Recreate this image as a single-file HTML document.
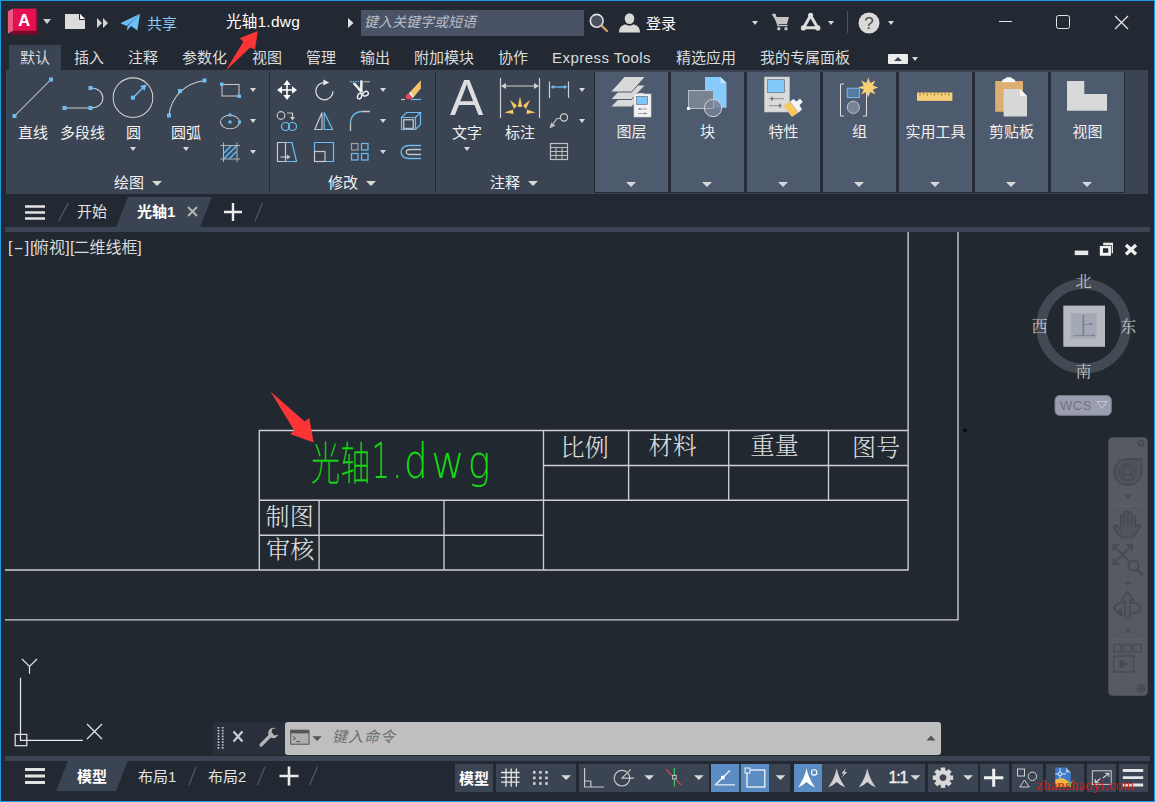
<!DOCTYPE html>
<html lang="zh-CN">
<head>
<meta charset="utf-8">
<title>光轴1.dwg</title>
<style>
*{box-sizing:border-box;margin:0;padding:0}
html,body{width:1155px;height:802px;overflow:hidden;background:#222933}
body{position:relative;font-family:"Liberation Sans","Noto Sans CJK SC",sans-serif;font-size:15px;color:#e8e8e8}
.abs{position:absolute}
#frame{position:absolute;left:0;top:0;width:1155px;height:802px;border:1px solid #1b9ae2;pointer-events:none;z-index:50}
.t{position:absolute;white-space:nowrap;line-height:20px;height:20px}
svg{position:absolute;overflow:visible}
/* title */
#rtabs .t{top:48px;color:#dcdcdc}
#rtabact{left:9px;top:45px;width:52px;height:26px;background:#3b4453}
#ribbon{left:6px;top:70px;width:1142px;height:123.700px;background:#3b4453}
.sep{position:absolute;top:72px;width:1px;height:120px;background:#262c37}
.pbtn{position:absolute;top:72px;width:73px;height:120px;background:#4e5a6e}
.pbtn .t{left:0;width:100%;text-align:center;top:49.5px;color:#f0f0f0}
.dd{position:absolute;width:0;height:0;border-left:4px solid transparent;border-right:4px solid transparent;border-top:5px solid #d8d8d8}
.dds{position:absolute;width:0;height:0;border-left:3px solid transparent;border-right:3px solid transparent;border-top:4px solid #d8d8d8}
#ftabs{left:5px;top:194px;width:1145px;height:33px;background:#222933}
#fstrip{left:5px;top:227px;width:1145px;height:5px;background:#3b4453}
#draw{left:5px;top:232px;width:1145px;height:528px;background:#212830}
#sbar{left:5px;top:760px;width:1145px;height:38px;background:#222933}
.lab{position:absolute;white-space:nowrap;font-family:"Liberation Serif","Noto Serif CJK SC",serif;font-size:24px;font-weight:300;line-height:32px;color:#e0e0e0;letter-spacing:0.300px}
.sg{position:absolute;top:763.500px;height:28.500px;background:#3b4453}
.vl span{position:absolute;top:0;display:inline-block}
</style>
</head>
<body>
<div id="frame"></div>

<!-- ===== TITLE BAR ===== -->
<div id="title" class="abs" style="left:0;top:0;width:1155px;height:45px">
<!-- logo -->
<svg style="left:0;top:0" width="45" height="40" viewBox="0 0 45 40">
<polygon points="11.200,31 13,12.700 36.300,12.700 38.100,12.700 38.100,34.800 11.200,34.800" fill="#78092a"/>
<polygon points="7.900,11.200 13.100,8.600 13.100,30.700 7.900,33.700" fill="#e9587f"/>
<rect x="13.100" y="8.600" width="23.200" height="22.100" fill="#e5104f"/>
<text x="24.300" y="25.800" text-anchor="middle" font-family="Liberation Sans,sans-serif" font-weight="bold" font-size="16.500" fill="#fff">A</text>
</svg>
<div class="dd" style="left:43px;top:19px;border-top-color:#d0d0d0"></div>
<!-- new file -->
<svg style="left:65px;top:14px" width="21" height="16" viewBox="0 0 21 16"><path d="M0 0H15L20 5V15H0Z" fill="#dcdcdc"/><path d="M15 0V5H20Z" fill="#f6f6f6"/><path d="M14.5 0V5.5H20" fill="none" stroke="#222933" stroke-width="1"/></svg>
<svg style="left:97px;top:18px" width="11" height="10" viewBox="0 0 11 10"><path d="M0 0L5 5L0 10ZM6 0L11 5L6 10Z" fill="#d4d4d4"/></svg>
<!-- share -->
<svg style="left:115px;top:10px" width="30" height="25" viewBox="115 10 30 25">
<path d="M120.300 23.200L140 13.800L126.800 26Z" fill="#6cbef5"/>
<path d="M140 13.800L128 25.500L127 30.500L131 26.200Z" fill="#4d9fd9"/>
<path d="M140 13.800L137.400 30.500L130 25.200Z" fill="#6cbef5"/>
<path d="M127.700 26.500L140 13.800L127 30.600Z" fill="#6cbef5"/>
</svg>
<div class="t" style="left:147px;top:14px;color:#8ccaf7">共享</div>
<div class="t" style="left:226px;top:11.500px;color:#fff;font-size:15.500px;letter-spacing:0.250px">光轴1.dwg</div>
<svg style="left:347.500px;top:17.500px" width="6" height="10" viewBox="0 0 6 10"><path d="M0 0L5.500 5L0 10Z" fill="#e0e0e0"/></svg>
<div class="abs" style="left:361px;top:10px;width:223px;height:26px;background:#4a5366"></div>
<div class="t" style="left:364px;top:12px;color:#b9bdc6;font-style:italic;font-size:14px">键入关键字或短语</div>
<!-- magnifier -->
<svg style="left:589px;top:13px" width="20" height="20" viewBox="0 0 20 20"><circle cx="7.700" cy="7.800" r="6.400" fill="#4a515c" stroke="#e0e0e0" stroke-width="1.600"/><path d="M12.800 12.800L18 18" stroke="#c9a06a" stroke-width="2.4" stroke-linecap="round"/></svg>
<!-- user -->
<svg style="left:619px;top:13px" width="21" height="20" viewBox="0 0 21 20"><ellipse cx="10.5" cy="5.6" rx="4.8" ry="5.4" fill="#d8d8d8"/><path d="M0 19.5C0 13.5 4 11.5 7 11.5C8.5 13 12.5 13 14 11.5C17 11.5 21 13.5 21 19.5Z" fill="#d8d8d8"/></svg>
<div class="t" style="left:646px;top:14px;color:#fff">登录</div>
<div class="dds" style="left:752px;top:21px"></div>
<!-- cart -->
<svg style="left:772px;top:13px" width="18" height="18" viewBox="0 0 18 18"><path d="M0 1.5H3L4 4H17L15 11H5.5Z" fill="#c4c4c4"/><path d="M0.3 1.5H3L6 12.5H15.5" fill="none" stroke="#c4c4c4" stroke-width="1.6"/><circle cx="6.8" cy="15.8" r="1.7" fill="#c4c4c4"/><circle cx="14" cy="15.8" r="1.7" fill="#c4c4c4"/></svg>
<!-- autodesk app -->
<svg style="left:799px;top:11px" width="23" height="21" viewBox="799 11 23 21"><path d="M810.600 15.400L803.600 27.800H817.600Z" fill="none" stroke="#dedede" stroke-width="3" stroke-linejoin="round"/><circle cx="810.600" cy="15.300" r="2.500" fill="#dedede"/><circle cx="803.400" cy="27.900" r="2.600" fill="#dedede"/><circle cx="817.800" cy="27.900" r="2.600" fill="#dedede"/></svg>
<div class="dds" style="left:828px;top:21px"></div>
<div class="abs" style="left:847px;top:11px;width:1px;height:22px;background:#44546f"></div>
<svg style="left:858px;top:12px" width="22" height="22" viewBox="0 0 22 22"><circle cx="11" cy="11" r="10.5" fill="#dadada"/><text x="11" y="17" text-anchor="middle" font-family="Liberation Sans,sans-serif" font-size="17" fill="#4c4c4c">?</text></svg>
<div class="dds" style="left:888px;top:21px"></div>
<!-- window controls -->
<div class="abs" style="left:998.500px;top:20.500px;width:13px;height:1.300px;background:#e4e4e4"></div>
<div class="abs" style="left:1056px;top:15px;width:13.500px;height:13.500px;border:1.400px solid #e4e4e4;border-radius:2.500px"></div>
<svg style="left:1114.500px;top:15.500px" width="13" height="13" viewBox="0 0 13 13"><path d="M0 0L13 13M13 0L0 13" stroke="#e4e4e4" stroke-width="1.300"/></svg>
</div>

<!-- ===== RIBBON TABS ===== -->
<div id="rtabact" class="abs"></div>
<div id="rtabs">
<div class="t" style="left:20px">默认</div>
<div class="t" style="left:74px">插入</div>
<div class="t" style="left:128px">注释</div>
<div class="t" style="left:182px">参数化</div>
<div class="t" style="left:252px">视图</div>
<div class="t" style="left:306px">管理</div>
<div class="t" style="left:360px">输出</div>
<div class="t" style="left:414px">附加模块</div>
<div class="t" style="left:498px">协作</div>
<div class="t" style="left:552px;letter-spacing:0.45px">Express Tools</div>
<div class="t" style="left:676px">精选应用</div>
<div class="t" style="left:760px">我的专属面板</div>
<div class="abs" style="left:888px;top:54px;width:20px;height:10px;background:#ececec;border-radius:1px"></div>
<div class="abs" style="left:894px;top:57px;width:0;height:0;border-left:4px solid transparent;border-right:4px solid transparent;border-bottom:4px solid #3b4453"></div>
<div class="dds" style="left:912px;top:57px"></div>
</div>

<!-- ===== RIBBON ===== -->
<div id="ribbon" class="abs"></div>
<div id="rib">
<!-- ==== DRAW PANEL ==== -->
<svg style="left:0;top:0" width="280" height="200" viewBox="0 0 280 200" fill="none" stroke="#cfcfcf" stroke-width="1.05">
<!-- line -->
<path d="M14.5 116L51 79.5"/>
<!-- polyline -->
<path d="M64.5 108H90.5M90.5 108C107 108 107 88 90.5 88"/>
<!-- circle -->
<circle cx="133" cy="97.7" r="19.8"/>
<path d="M133 97.7L144 86.7" stroke="#6dbdf2" stroke-width="1.4"/>
<path d="M146.5 84.2L140 86L144.7 90.7Z" fill="#6dbdf2" stroke="none"/>
<!-- arc -->
<path d="M169 115.5C171 96 186 83 204.5 80.5"/>
<g fill="#6dbdf2" stroke="none">
<rect x="12.5" y="114" width="4" height="4"/><rect x="49" y="77.5" width="4" height="4"/>
<rect x="62.5" y="106" width="4" height="4"/><rect x="88.5" y="106" width="4" height="4"/><rect x="88.5" y="86" width="4" height="4"/>
<rect x="131" y="95.7" width="4" height="4"/>
<rect x="167" y="113.5" width="4" height="4"/><rect x="178" y="89" width="4" height="4"/><rect x="202.5" y="78.5" width="4" height="4"/>
</g>
<!-- rectangle small -->
<rect x="222" y="84.5" width="17" height="11.5" stroke="#c8c8c8"/>
<rect x="220" y="82.5" width="3.5" height="3.5" fill="#6dbdf2" stroke="none"/><rect x="237.5" y="94.5" width="3.5" height="3.5" fill="#6dbdf2" stroke="none"/>
<!-- ellipse small -->
<ellipse cx="230" cy="122" rx="9.5" ry="6.8" stroke="#c8c8c8"/>
<rect x="228.5" y="113.5" width="3" height="3" fill="#6dbdf2" stroke="none"/><rect x="228.5" y="120.5" width="3" height="3" fill="#6dbdf2" stroke="none"/><rect x="238" y="120.5" width="3" height="3" fill="#6dbdf2" stroke="none"/>
<!-- hatch small -->
<rect x="223.5" y="145.500" width="13.5" height="13.500" fill="#35506a" stroke="none"/>
<path d="M224 153L231 146M224 158.500L236.500 146M229.500 158.500L236.500 151.500" stroke="#6dbdf2" stroke-width="1.3"/>
<path d="M220.500 145.500H240M220.500 159H240M223.500 142.500V162M237 142.500V162" stroke="#b4b4b4" stroke-width="1"/>
</svg>
<div class="t" style="left:18px;top:123px;color:#f2f2f2">直线</div>
<div class="t" style="left:60px;top:123px;color:#f2f2f2">多段线</div>
<div class="t" style="left:126px;top:123px;color:#f2f2f2">圆</div>
<div class="t" style="left:171px;top:123px;color:#f2f2f2">圆弧</div>
<div class="dds" style="left:130px;top:147px"></div>
<div class="dds" style="left:183px;top:147px"></div>
<div class="dds" style="left:250px;top:88px"></div>
<div class="dds" style="left:250px;top:119px"></div>
<div class="dds" style="left:250px;top:150px"></div>
<div class="t" style="left:114px;top:173px;color:#f2f2f2">绘图</div>
<div class="dd" style="left:152px;top:181px;border-width:5px 5px 0 5px"></div>
<div class="sep" style="left:269px"></div>

<!-- ==== MODIFY PANEL ==== -->
<svg style="left:270px;top:70px" width="165" height="125" viewBox="270 70 165 125" fill="none" stroke="#d6d6d6" stroke-width="1.2">
<!-- move -->
<path d="M286.200 84H287.800V89.200H293V90.800H287.800V96H286.200V90.800H281V89.200H286.200Z" fill="#fff" stroke="none"/>
<path d="M287 80L290.700 85H283.300ZM287 100L290.700 95H283.300ZM277 90L282 86.300V93.700ZM297 90L292 86.300V93.700Z" fill="#fff" stroke="none"/>
<!-- rotate -->
<path d="M323.800 82.600A8.600 8.600 0 1 0 333 91.200" stroke="#e0e0e0" stroke-width="1.200"/>
<path d="M323.300 79.600L329.200 82.600L323.300 85.600Z" fill="#e8e8e8" stroke="none"/>
<!-- trim -->
<path d="M350 81.700H359" stroke="#6dbdf2" stroke-dasharray="1.600 1" stroke-width="1.300"/><path d="M363.500 81.700H370" stroke="#a8a8a8" stroke-width="1.300"/>
<path d="M352.600 83.400L354.800 82.500L363 91.200L360.600 92.800Z" fill="#f0f0f0" stroke="none"/>
<path d="M360.200 80.300L362.700 80.600L362.500 92.500H360Z" fill="#f0f0f0" stroke="none"/>
<ellipse cx="359.600" cy="96.200" rx="2" ry="2.900" transform="rotate(18 359.600 96.200)" stroke="#f0f0f0" stroke-width="1.400"/><ellipse cx="365.600" cy="93.700" rx="2.900" ry="2.100" transform="rotate(-25 365.600 93.700)" stroke="#f0f0f0" stroke-width="1.400"/>
<!-- eraser -->
<path d="M410.500 91.500L420.800 80.200V88.500L414.200 96.500Z" fill="#f2c56b" stroke="none"/>
<path d="M408.800 93.200L410.500 91.500L414.200 96.500L412.500 98Z" fill="#f4f4f4" stroke="none"/>
<path d="M405.800 95.500Q405 98 407 99Q409.500 100 412.500 98L408.800 93.200Z" fill="#ee4459" stroke="none"/>
<path d="M401 99.500H405" stroke="#c8c8c8"/><path d="M411 99.500H421" stroke="#6dbdf2"/>
<!-- copy -->
<circle cx="281" cy="115.500" r="3.800" stroke="#c8c8c8"/>
<path d="M287 113H292.500V118" stroke="#c8c8c8"/><path d="M290 117L292.500 120.500L295 117Z" fill="#c8c8c8" stroke="none"/>
<circle cx="285.500" cy="126.500" r="4" stroke="#6dbdf2"/><circle cx="292.500" cy="126.500" r="4" stroke="#6dbdf2"/>
<!-- mirror -->
<path d="M322 112.500L314.800 129.500H322Z" stroke="#c8c8c8"/><path d="M324.200 112.500L332.500 129.500H324.200Z" stroke="#6dbdf2"/>
<!-- fillet -->
<path d="M362 111.500C355.500 111.500 350.500 116.500 350.500 123" stroke="#6dbdf2" stroke-width="1.300"/><path d="M350.500 123V131M362 111.500H370" stroke="#c8c8c8" stroke-width="1.300"/>
<!-- box -->
<path d="M401.500 117.500H415.500V129.500H401.500ZM401.500 117.500L406.500 112.500H420.500L415.500 117.500M420.500 112.500V124.500L415.500 129.500" stroke="#6dbdf2" stroke-width="1.200"/>
<rect x="403.700" y="119.700" width="9.600" height="8.800" stroke="#b8b8b8" stroke-width="1.500"/>
<!-- stretch -->
<path d="M277.500 142.500H285.500V161.500H277.500Z" stroke="#c8c8c8"/>
<path d="M285.500 142.500H292L296.500 161.500H285.500" stroke="#6dbdf2"/>
<path d="M280.500 157H288" stroke="#c8c8c8"/><path d="M287 154.500L290.500 157L287 159.500Z" fill="#c8c8c8" stroke="none"/>
<!-- scale -->
<path d="M314.500 142.500H333.500V161.500H325" stroke="#6dbdf2"/><path d="M314.500 142.500V151.500" stroke="#6dbdf2"/>
<rect x="314.500" y="151.500" width="10.500" height="10" stroke="#c8c8c8"/>
<!-- array -->
<rect x="351.500" y="143.500" width="6.500" height="6.500" stroke="#a0a0a0"/><rect x="361.500" y="143.500" width="6.500" height="6.500" stroke="#6dbdf2"/>
<rect x="351.500" y="153.500" width="6.500" height="6.500" stroke="#6dbdf2"/><rect x="361.500" y="153.500" width="6.500" height="6.500" stroke="#6dbdf2"/>
<!-- offset -->
<path d="M421 145.500H409C398.500 145.500 398.500 158.500 409 158.500H421" stroke="#6dbdf2" stroke-width="1.300"/>
<path d="M421 149.500H410C405 149.500 405 154.500 410 154.500H421" stroke="#c8c8c8" stroke-width="1.300"/>
</svg>
<div class="dds" style="left:380px;top:88px"></div>
<div class="dds" style="left:380px;top:119px"></div>
<div class="dds" style="left:380px;top:150px"></div>
<div class="t" style="left:328px;top:173px;color:#f2f2f2">修改</div>
<div class="dd" style="left:366px;top:181px;border-width:5px 5px 0 5px"></div>
<div class="sep" style="left:435px"></div>

<!-- ==== ANNOTATE PANEL ==== -->
<div class="t" style="left:450px;top:70px;height:56px;line-height:56px;font-size:50px;color:#dedede;font-family:'Liberation Sans',sans-serif">A</div>
<div class="t" style="left:452px;top:123px;color:#f2f2f2">文字</div>
<div class="dds" style="left:464px;top:147px"></div>
<svg style="left:495px;top:70px" width="100" height="100" viewBox="495 70 100 100" fill="none" stroke="#d6d6d6" stroke-width="1.200">
<path d="M500.500 78V118M539.500 78V118M502 86H538" stroke="#d0d0d0"/>
<path d="M501 86L506 83V89ZM539 86L534 83V89Z" fill="#d0d0d0" stroke="none"/>
<g fill="#f6c761" stroke="none">
<path d="M520 96.500L522.200 107H517.800Z"/>
<path d="M510 100L517 105.500L514 109Z"/>
<path d="M530 100L523 105.500L526 109Z"/>
<path d="M504.500 112.500L513 109.500L513.500 114Z"/>
<path d="M535.500 112.500L527 109.500L526.500 114Z"/>
</g>
<!-- small linear dim -->
<path d="M549.500 81.500V98M568.500 81.500V98" stroke="#d0d0d0"/>
<path d="M552 87H566" stroke="#6dbdf2" stroke-width="1.400"/><path d="M550.500 87L554 85V89ZM567.500 87L564 85V89Z" fill="#6dbdf2" stroke="none"/>
<!-- leader -->
<circle cx="564" cy="117.500" r="3.600" stroke="#d0d0d0"/>
<path d="M560.500 118.500H557L551.500 126" stroke="#c0c0c0"/><path d="M549.500 128.500L551 122.500L555.500 125.500Z" fill="#c0c0c0" stroke="none"/>
<!-- table -->
<rect x="550.500" y="143.500" width="17" height="16" stroke="#c0c0c0"/>
<path d="M550.500 147.500H567.500M550.500 151.500H567.500M550.500 155.500H567.500M556 147.500V159.500M562 147.500V159.500" stroke="#c0c0c0" stroke-width="1"/>
</svg>
<div class="t" style="left:505px;top:123px;color:#f2f2f2">标注</div>
<div class="dds" style="left:579px;top:88px"></div>
<div class="dds" style="left:579px;top:119px"></div>
<div class="t" style="left:490px;top:173px;color:#f2f2f2">注释</div>
<div class="dd" style="left:528px;top:181px;border-width:5px 5px 0 5px"></div>
</div>


<!-- ==== COLLAPSED PANELS ==== -->
<div id="pans">
<div class="abs" style="left:593.500px;top:71.500px;width:531.700px;height:121.700px;background:#252c37"></div>
<div class="pbtn" style="left:595px"><div class="t">图层</div><div class="dd" style="left:31px;top:110px;border-width:5px 5px 0 5px"></div></div>
<div class="pbtn" style="left:671px"><div class="t">块</div><div class="dd" style="left:31px;top:110px;border-width:5px 5px 0 5px"></div></div>
<div class="pbtn" style="left:747px"><div class="t">特性</div><div class="dd" style="left:31px;top:110px;border-width:5px 5px 0 5px"></div></div>
<div class="pbtn" style="left:823px"><div class="t">组</div><div class="dd" style="left:31px;top:110px;border-width:5px 5px 0 5px"></div></div>
<div class="pbtn" style="left:899px"><div class="t">实用工具</div><div class="dd" style="left:31px;top:110px;border-width:5px 5px 0 5px"></div></div>
<div class="pbtn" style="left:975px"><div class="t">剪贴板</div><div class="dd" style="left:31px;top:110px;border-width:5px 5px 0 5px"></div></div>
<div class="pbtn" style="left:1051px"><div class="t">视图</div><div class="dd" style="left:31px;top:110px;border-width:5px 5px 0 5px"></div></div>
<svg style="left:590px;top:70px" width="550" height="60" viewBox="590 70 550 60">
<!-- layers -->
<g fill="#d9d9d9" stroke="#4e5a6e" stroke-width="1">
<path d="M610.500 107L624.500 92.500H645.500L631.500 107Z"/>
<path d="M610.500 99.500L624.500 85H645.500L631.500 99.500Z"/>
<path d="M610.500 92L624.500 76.500H645.500L631.500 92Z"/>
</g>
<rect x="634" y="94" width="17" height="23" fill="#f2f2f2" stroke="#cfcfcf" stroke-width="0.600"/>
<rect x="636.500" y="96.500" width="11" height="8" fill="#7cc8fb" stroke="#56606f" stroke-width="0.600"/>
<path d="M638 109H647M638 113.500H647" stroke="#8a8a8a" stroke-width="0.800"/><path d="M638 109L640.500 107.700V110.300ZM647 113.500L644.500 112.200V114.800Z" fill="#8a8a8a"/>
<!-- block -->
<path d="M705 77H720.500L726.500 83V107.700H705Z" fill="#86cbfb"/><path d="M720.500 77V83H726.500Z" fill="#c4e4fb"/>
<rect x="688.500" y="90.500" width="25" height="18" fill="#798394" stroke="#b9bdc4" stroke-width="1"/>
<circle cx="713" cy="108" r="8.700" fill="#798394" fill-opacity="0.850" stroke="#d4d4d4" stroke-width="1"/>
<path d="M713.500 99.500V108.500H704.500" fill="none" stroke="#aab0ba" stroke-width="0.800"/>
<rect x="687" y="107" width="3" height="3" fill="#f0f0f0"/>
<!-- properties -->
<rect x="764.500" y="77" width="25" height="35" fill="#dadada" stroke="#c2c2c2" stroke-width="0.600"/>
<rect x="767.500" y="79.700" width="17" height="12.800" fill="#82cafb" stroke="#56606f" stroke-width="0.600"/>
<path d="M769 98.700H784M769 105.700H782" stroke="#7a7a7a" stroke-width="0.800"/><path d="M772 96.700V100.700M780 103.700V107.700" stroke="#555" stroke-width="1.200"/>
<path d="M783.500 106L790 101.500L798.500 112.500L792 117Z" fill="#f6c761"/>
<path d="M790 101.500L793.500 99L796.500 101.500L800 98.500L802.800 102L799.500 105L802 109.500L798.500 112.500Z" fill="#f4f4f4"/>
<!-- group -->
<path d="M844 84H840.500V116H844M863 84H866.500V116H863" fill="none" stroke="#e0e0e0" stroke-width="1"/>
<rect x="847.200" y="88.200" width="12.300" height="9.400" fill="#557aa3" stroke="#79c2f5" stroke-width="0.900"/>
<circle cx="853.300" cy="107.300" r="6.100" fill="#798394" stroke="#c6c9cf" stroke-width="0.900"/>
<path d="M868.300 77.500L870.200 83L875.400 80.400L872.800 85.600L878.300 87.500L872.800 89.400L875.400 94.600L870.200 92L868.300 97.500L866.400 92L861.200 94.600L863.800 89.400L858.300 87.500L863.800 85.600L861.200 80.400L866.400 83Z" fill="#f9d078"/>
<!-- ruler -->
<rect x="917" y="92.500" width="35.400" height="8.400" fill="#f6cf7a"/>
<path d="M920 92.500V96M923.600 92.500V95M927.200 92.500V96M930.800 92.500V95M934.400 92.500V96M938 92.500V95M941.600 92.500V96M945.200 92.500V95M948.800 92.500V96" stroke="#b38b3a" stroke-width="1.100"/>
<!-- clipboard -->
<rect x="995.200" y="81" width="27.800" height="30.800" fill="#dcae72"/>
<path d="M1002 82.300C1002 78 1005.500 79.500 1006.500 77.200H1011C1012 79.500 1015.500 78 1015.500 82.300Z" fill="#f6f6f6"/>
<path d="M1003.600 89H1020L1027 96V116.400H1003.600Z" fill="#d8d8d8"/><path d="M1020 89V96H1027Z" fill="#f4f4f4"/>
<!-- view -->
<path d="M1067 81H1084.300V94H1107V110.800H1067Z" fill="#d9d9d9"/>
</svg>
</div>

<!-- ===== FILE TABS ===== -->
<div id="ftabs" class="abs"></div>
<div id="fstrip" class="abs"></div>
<svg style="left:0;top:194px" width="300" height="34" viewBox="0 194 300 34">
<path d="M116 227L128 197H212L200 227Z" fill="#3b4453"/>
<path d="M25 206.500H45M25 212.500H45M25 218.500H45" stroke="#e2e2e2" stroke-width="2.600"/>
<path d="M58.500 221L68.500 203M255 221L262.500 203" stroke="#4f5868" stroke-width="1.300"/>
<path d="M188 207L197 216M197 207L188 216" stroke="#b8b8b8" stroke-width="1.800"/>
<path d="M224 212H242M233 203V221" stroke="#ececec" stroke-width="2.400"/>
</svg>
<div class="t" style="left:77px;top:202px;color:#e4e4e4">开始</div>
<div class="t" style="left:137px;top:202px;color:#fff;font-weight:bold">光轴1</div>

<!-- ===== DRAWING ===== -->
<div id="draw" class="abs"></div>
<div id="dw">
<div class="t vl" style="left:0;top:238px;width:150px;color:#dadada;font-size:16px"><span style="left:8px">[</span><span style="left:15.800px;transform:scaleX(1.900);transform-origin:50% 50%">-</span><span style="left:24.800px">]</span><span style="left:30.100px">[</span><span style="left:33px">俯视</span><span style="left:65.200px">]</span><span style="left:70.100px">[</span><span style="left:73.600px">二维线框</span><span style="left:137.300px">]</span></div>
<svg style="left:0;top:232px" width="1155" height="530" viewBox="0 232 1155 530" fill="none" stroke="#d0d0d0" stroke-width="1.350">
<!-- frames -->
<path d="M958 232V619.800H5"/>
<path d="M908.100 232V570H5"/>
<!-- title block -->
<path d="M259.300 570V430.500H908"/>
<path d="M259.300 500.200H908"/>
<path d="M543.500 465.500H908"/>
<path d="M259.300 535.200H543.500"/>
<path d="M543.500 430.500V570M319.100 500.200V570M444 500.200V570M628.600 430.500V500.200M728.700 430.500V500.200M828.500 430.500V500.200"/>
<!-- ucs -->
<g stroke="#e8e8e8" stroke-width="1.200">
<path d="M20.500 677.700V740.300H82.800"/>
<rect x="15.200" y="734.400" width="11.600" height="11.300"/>
<path d="M22 659L29.500 666.500L37 659M29.500 666.500V673.800"/>
<path d="M87 724L102 739M102 724L87 739"/>
</g>
<circle cx="965" cy="430.500" r="2" fill="#0a0a0a" stroke="none"/>
</svg>
<!-- table labels -->
<div class="lab" style="left:265.500px;top:500.500px">制图</div>
<div class="lab" style="left:266px;top:534px">审核</div>
<div class="lab" style="left:560.500px;top:431.500px">比例</div>
<div class="lab" style="left:648.500px;top:429.500px">材料</div>
<div class="lab" style="left:750.500px;top:429.500px">重量</div>
<div class="lab" style="left:852px;top:431.500px">图号</div>
<!-- green text -->
<svg style="left:300px;top:430px" width="200" height="70" viewBox="300 430 200 70" fill="#16d916">
<g font-family="'Liberation Sans','Noto Sans CJK SC',sans-serif" font-weight="100" font-size="45.500" stroke="#16d916" stroke-width="0.500">
<text transform="translate(311.300 479.500) scale(0.630 1)">光</text>
<text transform="translate(340.400 479.500) scale(0.650 1)">轴</text>
</g>
<g font-family="'DejaVu Sans','Liberation Sans',sans-serif" font-weight="200" font-size="48">
<text transform="translate(371.500 478.300) scale(0.600 1.050)">1</text>
<text transform="translate(392.300 478.300) scale(0.650 1)">.</text>
<text transform="translate(404.100 478.300) scale(0.780 1)">d</text>
<text transform="translate(431.200 478.300) scale(0.850 0.960)">w</text>
<text transform="translate(467.850 478.300) scale(0.790 0.960)">g</text>
</g>
</svg>
<!-- red arrows -->
<svg style="left:200px;top:20px" width="130" height="450" viewBox="200 20 130 450">
<path d="M257.800 31.100L255 49.500L250.200 47.500L225.500 70.900L243.300 41.700L239.700 38.300Z" fill="#fb3535"/>
<path d="M313.700 442.400L290.100 433.900L294.200 430.400L270.500 391.500L304.700 421.500L309.300 418Z" fill="#fb3535"/>
</svg>

<!-- viewport controls -->
<svg style="left:1070px;top:240px" width="75" height="20" viewBox="1070 240 75 20">
<rect x="1074.700" y="250.600" width="13.500" height="4.500" fill="#e8e8e8"/>
<path d="M1103.200 242.700H1113V253.300H1103.200Z" fill="#e8e8e8"/>
<rect x="1099" y="245.300" width="12.700" height="11.300" fill="#212830"/>
<path d="M1099.800 246.100H1111V255.800H1099.800ZM1103 248.300V252.700H1108.200V248.300Z" fill="#f0f0f0" fill-rule="evenodd"/>
<path d="M1126 245L1136 254.200M1136 245L1126 254.200" stroke="#f0f0f0" stroke-width="3.400"/>
</svg>
<!-- viewcube -->
<svg style="left:1030px;top:270px" width="110" height="150" viewBox="1030 270 110 150">
<circle cx="1083.600" cy="326.400" r="42.300" fill="none" stroke="#434a54" stroke-width="10"/>
<rect x="1063.300" y="305.600" width="41.700" height="41.200" fill="#b6b9bf"/>
<rect x="1070.700" y="313.300" width="26" height="25.200" fill="#a4a9b6"/>
<rect x="1055" y="395.600" width="56.300" height="19.700" rx="4.500" fill="#9a9eae" stroke="#7b8090" stroke-width="1"/>
<path d="M1097 401.500H1107L1102 408.500Z" fill="none" stroke="#c4c7d0" stroke-width="1"/>
<g font-family="'Liberation Serif','Noto Serif CJK SC',serif" font-size="16" fill="#c2c2c2" text-anchor="middle">
<text x="1083.600" y="287">北</text>
<text x="1083.600" y="377.200">南</text>
<text x="1039.500" y="332">西</text>
<text x="1128.300" y="332">东</text>
<text x="1084" y="334.500" font-size="24" fill="#7f838d">上</text>
</g>
<text x="1060" y="410" font-family="'Liberation Sans',sans-serif" font-size="13" fill="#6f7382" letter-spacing="0.500">WCS</text>
</svg>
<!-- nav bar -->
<svg style="left:1105px;top:435px" width="45" height="265" viewBox="1105 435 45 265">
<rect x="1108.500" y="437.500" width="39" height="258" rx="4" fill="#575b61" stroke="#484c53" stroke-width="1"/>
<g fill="none" stroke="#464a52" stroke-width="1.600">
<circle cx="1141" cy="443.200" r="3.600" fill="#464a52" stroke="none"/>
<path d="M1139.300 441.500L1142.700 444.900M1142.700 441.500L1139.300 444.900" stroke="#5d6168" stroke-width="0.900"/>
<path d="M1127.500 459H1141.500V472C1141.500 479.500 1135.500 485 1127.800 485C1120 485 1114.300 479.500 1114.300 472C1114.300 464.500 1120 459 1127.500 459Z" stroke-width="1.800" fill="#4f535a"/>
<circle cx="1127.800" cy="472" r="8.200" stroke-width="1.600"/><circle cx="1127.800" cy="471" r="4.200" stroke-width="1.400" fill="#50545b"/>
<path d="M1122 477.500L1124.500 474.500M1133.600 477.500L1131 474.500" stroke-width="1.200"/>
<path d="M1111 505.400H1145M1111 639.400H1145" stroke-width="0.600" stroke="#62666d"/>
<path d="M1121.500 537.500C1118 534 1114.500 529.500 1113.800 527C1113.500 524.500 1116.500 524.500 1118 526.500L1120.800 530V516.500C1120.800 513.800 1124 513.800 1124.200 516.500V524V513C1124.400 510.300 1127.800 510.300 1128 513V524V513.500C1128.200 511 1131.500 511 1131.700 513.500V524.500V517C1132 514.800 1135 514.800 1135.300 517.200V527C1137 524 1141.500 523.500 1139.500 527.500C1137.500 531.500 1136 535 1133 537.500Z" fill="#50545b" stroke-width="1.500" stroke-linejoin="round"/>
<path d="M1114 546L1131 563M1131.500 545.500L1114 563" stroke-width="1.800"/>
<path d="M1113.500 551V545H1119.500M1126 545H1132V551M1113.500 558V564H1119.500" stroke-width="1.800"/>
<circle cx="1133.500" cy="565.500" r="5" fill="#575b61" stroke-width="2"/><path d="M1137.200 569.500L1142 574.500" stroke-width="3" stroke-linecap="round"/>
<ellipse cx="1127.500" cy="608" rx="13.500" ry="5.800" stroke-width="1.800"/>
<path d="M1125 618V600H1121.500L1127.500 592L1133.500 600H1130V618Z" fill="#575b61" stroke-width="1.500"/>
<path d="M1121 608.500L1116 613L1122 616Z" fill="#464a52" stroke-width="1"/>
<rect x="1113.800" y="644.500" width="7.500" height="7.500" stroke-width="1.300"/><rect x="1123.800" y="644.500" width="7.500" height="7.500" stroke-width="1.300"/><rect x="1133.800" y="644.500" width="7.500" height="7.500" stroke-width="1.300"/>
<rect x="1113.800" y="656" width="19.800" height="16" stroke-width="1.400"/><path d="M1119.500 659.500L1128.500 664L1119.500 668.500Z" fill="#464a52" stroke="none"/>
<circle cx="1141" cy="688.700" r="3.800" stroke-width="1.100" fill="#4c5057"/><path d="M1137.500 688.700H1144.500" stroke-width="0.900"/>
</g>
<g fill="#464a52"><path d="M1124.500 495H1131.500L1128 499Z"/><path d="M1124.500 582H1131.500L1128 586Z"/><path d="M1124.500 629H1131.500L1128 633Z"/></g>
</svg>

<!-- command line -->
<div class="abs" style="left:213px;top:721.500px;width:76px;height:33px;background:#29303c;border-radius:3px"></div>
<div class="abs" style="left:285px;top:721.500px;width:655.500px;height:33px;background:#bfbfbf;border-radius:3px"></div>
<svg style="left:213px;top:721px" width="730" height="34" viewBox="213 721 730 34">
<path d="M218.500 727V749M222.700 727V749" stroke="#bfc3cb" stroke-width="1.800" stroke-dasharray="1.600 1.270"/>
<path d="M233.500 731.500L242.500 741.500M242.500 731.500L233.500 741.500" stroke="#cfcfcf" stroke-width="2.200"/>
<path d="M261 745L271.500 734.500" stroke="#b4b4b4" stroke-width="3.200" stroke-linecap="round"/>
<path d="M276 728.500A5.200 5.200 0 1 0 278.300 734.500L274.500 735.500L271.500 732.500L272.500 728.800Z" fill="#b4b4b4"/>
<rect x="290.700" y="730.200" width="18.300" height="14" fill="#b0b0b0" stroke="#555" stroke-width="1"/>
<rect x="290.700" y="730.200" width="18.300" height="3.200" fill="#555"/>
<path d="M293 736.500L295.500 738.300L293 740.100M296.500 741.500H300" stroke="#444" stroke-width="0.900" fill="none"/>
<path d="M312.400 736.300H321.800L317.100 741Z" fill="#555"/>
<path d="M926.500 740.500H935.500L931 735.500Z" fill="#555"/>
</svg>
<div class="t" style="left:332px;top:727px;color:#6e6e6e;font-style:italic;letter-spacing:1px">键入命令</div>
</div>

<!-- ===== STATUS BAR ===== -->
<div id="sbar" class="abs"></div>
<div class="abs" style="left:5px;top:756px;width:1145px;height:5px;background:#3b4453"></div>
<div id="sb">
<svg style="left:0;top:760px" width="330" height="34" viewBox="0 760 330 34">
<path d="M56 791L68 761H127.700L116 791Z" fill="#3b4453"/>
<path d="M25 769.500H45M25 776H45M25 782.500H45" stroke="#e2e2e2" stroke-width="2.800"/>
<path d="M189 785L196 767M257.500 785L265 767M309.500 785L317.500 767" stroke="#4f5868" stroke-width="1.300"/>
<path d="M279.500 776H298.500M289 766.500V785.500" stroke="#ececec" stroke-width="2.600"/>
</svg>
<div class="t" style="left:77px;top:766.500px;color:#fff;font-weight:bold">模型</div>
<div class="t" style="left:138px;top:766.500px;color:#e4e4e4">布局1</div>
<div class="t" style="left:208px;top:766.500px;color:#e4e4e4">布局2</div>
<!-- status right -->
<div class="sg" style="left:455px;width:38px"></div>
<div class="sg" style="left:496px;width:80px"></div>
<div class="sg" style="left:579px;width:130px"></div>
<div class="sg" style="left:710.500px;width:79.500px"></div>
<div class="sg" style="left:793.500px;width:131.500px"></div>
<div class="sg" style="left:928px;width:50px"></div>
<div class="sg" style="left:979.500px;width:29.500px"></div>
<div class="sg" style="left:1012px;width:31px"></div>
<div class="sg" style="left:1046px;width:37.500px"></div>
<div class="sg" style="left:1087px;width:29px"></div>
<div class="sg" style="left:1118.500px;width:29.500px"></div>
<div class="sg" style="left:710.800px;width:28px;background:#5b8dc4"></div>
<div class="sg" style="left:740.800px;width:28.200px;background:#5b8dc4"></div>
<div class="sg" style="left:793.800px;width:28.500px;background:#5b8dc4"></div>
<div class="t" style="left:459px;top:768.500px;color:#fff;font-weight:bold">模型</div>
<svg style="left:495px;top:760px" width="655" height="36" viewBox="495 760 655 36" fill="none">
<!-- grid -->
<path d="M501 772.500H519.600M501 777.300H519.600M501 782.100H519.600M506 768.400V786.700M511.200 768.400V786.700M516.400 768.400V786.700" stroke="#e4e4e4" stroke-width="1.300"/>
<!-- snap dots -->
<g fill="#d4d4d4"><rect x="533" y="771" width="2.600" height="2.600"/><rect x="539.100" y="771" width="2.600" height="2.600"/><rect x="545.200" y="771" width="2.600" height="2.600"/>
<rect x="533" y="776.600" width="2.600" height="2.600"/><rect x="539.100" y="776.600" width="2.600" height="2.600"/><rect x="545.200" y="776.600" width="2.600" height="2.600"/>
<rect x="533" y="782.200" width="2.600" height="2.600"/><rect x="539.100" y="782.200" width="2.600" height="2.600"/><rect x="545.200" y="782.200" width="2.600" height="2.600"/></g>
<g fill="#d8d8d8"><path d="M561.200 775.200H571L566.100 780Z"/><path d="M644.300 775.200H654.100L649.200 780Z"/><path d="M694 775.200H703.800L698.900 780Z"/><path d="M775.600 775.200H785.400L780.500 780Z"/><path d="M910.500 775.200H920.300L915.400 780Z"/><path d="M963.200 775.200H973L968.100 780Z"/></g>
<!-- ortho -->
<path d="M584.600 768V787H603.800M584.600 781H590.800V787" stroke="#c8c8c8" stroke-width="1.200"/>
<!-- polar -->
<circle cx="622" cy="778.200" r="7.800" stroke="#c8c8c8" stroke-width="1.200"/><path d="M634 778.200H622L630.800 769.400" stroke="#c8c8c8" stroke-width="1.200"/>
<!-- isnap -->
<path d="M674.400 768V786.500" stroke="#3fc86a" stroke-width="1.200"/><path d="M666 769.400L681.200 784.800" stroke="#e04848" stroke-width="1.200"/><rect x="672.600" y="775.300" width="3.600" height="3.600" fill="#3b4453" stroke="#d8d8d8" stroke-width="0.900"/>
<!-- otrack -->
<path d="M729.900 770.500L715.700 784.600H735" stroke="#f4f4f4" stroke-width="1.400"/><rect x="721" y="775.800" width="3.600" height="3.600" fill="#fff"/>
<path d="M716 784.700H735" stroke="#c5d6ea" stroke-width="1.400"/>
<!-- osnap 2d -->
<rect x="747" y="770" width="17.800" height="17" stroke="#f4f4f4" stroke-width="1.300"/><rect x="745" y="768" width="5" height="5" fill="#5b8dc4" stroke="#f4f4f4" stroke-width="1"/>
<!-- annotation icons -->
<path d="M806.5 768.200Q808.0 777 815.0 787.600Q809.5 785 806.5 782Q803.5 785 798.0 787.600Q805.0 777 806.5 768.200Z" fill="#fff"/><circle cx="814.200" cy="772.400" r="2.700" stroke="#fff" stroke-width="1.100"/>
<path d="M836.7 768.200Q838.2 777 845.2 787.600Q839.7 785 836.7 782Q833.7 785 828.2 787.600Q835.2 777 836.7 768.200Z" fill="#d2d2d2"/><path d="M846 768L841.500 773.500H844L841.500 778L847 772H844.500Z" fill="#d2d2d2"/>
<path d="M867.3 768.200Q868.8 777 875.8 787.600Q870.3 785 867.3 782Q864.3 785 858.8 787.600Q865.8 777 867.3 768.200Z" fill="#d2d2d2"/>
<!-- gear -->
<g transform="translate(943 777.700)"><circle r="5.600" stroke="#d8d8d8" stroke-width="4.400"/><g fill="#d8d8d8"><rect x="-2.200" y="-10.200" width="4.400" height="4"/><rect x="-2.200" y="6.200" width="4.400" height="4"/><rect x="-10.200" y="-2.200" width="4" height="4.400"/><rect x="6.200" y="-2.200" width="4" height="4.400"/>
<g transform="rotate(45)"><rect x="-2.200" y="-10.200" width="4.400" height="4"/><rect x="-2.200" y="6.200" width="4.400" height="4"/><rect x="-10.200" y="-2.200" width="4" height="4.400"/><rect x="6.200" y="-2.200" width="4" height="4.400"/></g></g></g>
<!-- plus -->
<path d="M984 777.700H1003.300M993.700 768.800V786.700" stroke="#f0f0f0" stroke-width="3"/>
<!-- shapes -->
<rect x="1017.500" y="769" width="7" height="7" stroke="#d0d0d0" stroke-width="1"/><circle cx="1032.400" cy="776.300" r="4.200" stroke="#d0d0d0" stroke-width="1"/><path d="M1024.500 780L1029.300 787H1019.700Z" stroke="#d0d0d0" stroke-width="1"/>
<!-- file icon -->
<path d="M1055.300 767.400H1066L1070.800 772.500V786.700H1055.300Z" fill="#3d7bc9"/><path d="M1066 767.400V772.500H1070.800Z" fill="#a6c8ee"/>
<path d="M1055.300 779.500L1063 778L1070.800 783V786.700H1055.300Z" fill="#f0b840"/><path d="M1055.300 783L1070.800 786.700H1055.300Z" fill="#e8873a"/>
<path d="M1055.300 774H1066M1060 768V779" stroke="#cfe2f7" stroke-width="1"/><circle cx="1060" cy="774" r="1.800" fill="#3d7bc9" stroke="#e8f1fb" stroke-width="0.900"/>
<path d="M1066 783.500L1068.500 786L1073 780.500" stroke="#37c25a" stroke-width="1.400"/>
<!-- fullscreen -->
<rect x="1092.400" y="770.800" width="18.800" height="13.600" stroke="#c4c4c4" stroke-width="1.100"/>
<path d="M1103 778L1108.500 773.500M1105 773.200H1108.800V777M1100.500 778.500L1095.500 782.500M1095.200 779V782.800H1099" stroke="#d4d4d4" stroke-width="1.100"/>
<!-- menu -->
<path d="M1122.800 770.500H1143.200M1122.800 777.700H1143.200M1122.800 785H1143.200" stroke="#e6e6e6" stroke-width="2.800"/>
<text x="1036.600" y="790.200" font-family="'Liberation Serif',serif" font-size="14" fill="#d81818" textLength="97.600" lengthAdjust="spacing">zhanshaoyi.com</text>
</svg>
<div class="t" style="left:888.500px;top:768px;color:#f0f0f0;font-size:16px;letter-spacing:-1.200px;-webkit-text-stroke:0.350px #f0f0f0">1:1</div>
</div>
</body>
</html>
